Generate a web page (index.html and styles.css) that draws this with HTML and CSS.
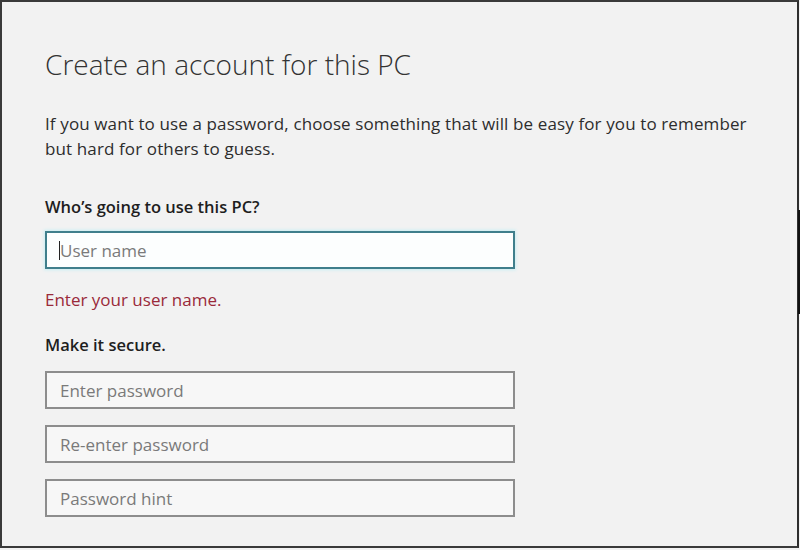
FILE: index.html
```html
<!DOCTYPE html>
<html lang="en">
<head>
<meta charset="utf-8">
<title>Create an account for this PC</title>
<link rel="stylesheet" href="styles.css">
</head>
<body>
<div class="frame">
  <div class="content">
    <h1 class="title">Create an account for this PC</h1>
    <p class="intro">If you want to use a password, choose something that will be easy for you to remember but hard for others to guess.</p>
    <h2 class="label label-who">Who’s going to use this PC?</h2>
    <div class="field field-focus">
      <span class="caret"></span>
      <input class="input" type="text" placeholder="User name">
    </div>
    <p class="error">Enter your user name.</p>
    <h2 class="label label-secure">Make it secure.</h2>
    <div class="stack">
      <div class="field"><input class="input" type="password" placeholder="Enter password"></div>
      <div class="field"><input class="input" type="password" placeholder="Re-enter password"></div>
      <div class="field"><input class="input" type="text" placeholder="Password hint"></div>
    </div>
  </div>
  <span class="thumb"></span>
</div>
</body>
</html>
```
FILE: styles.css
```css
html, body {
  margin: 0;
  padding: 0;
  background: #f2f2f2;
}
body {
  width: 800px;
  height: 550px;
  overflow: hidden;
  font-family: "Open Sans", "Noto Sans", "Liberation Sans", sans-serif;
  color: #2b2b2b;
}
.frame {
  position: relative;
  box-sizing: border-box;
  width: 799px;
  height: 548px;
  border-top: 2px solid #3a3a3a;
  border-left: 2px solid #3a3a3a;
  border-right: 2px solid #2e2e2e;
  border-bottom: 2px solid #3a3a3a;
  background: #f2f2f2;
}
.content {
  padding-left: 43px;
  padding-top: 45px;
  width: 720px;
}
.title {
  margin: 0;
  font-size: 28px;
  font-weight: 300;
  line-height: 34px;
  color: #333;
}
.intro {
  margin: 30px 0 0;
  font-size: 17px;
  line-height: 25px;
  letter-spacing: 0.12px;
  color: #2d2d2d;
}
.label {
  margin: 0;
  font-size: 16.5px;
  font-weight: 600;
  line-height: 22px;
  color: #1e1e1e;
}
.label-who {
  margin-top: 35px;
}
.label-secure {
  margin-top: 23px;
}
.field {
  position: relative;
  box-sizing: border-box;
  width: 470px;
  height: 38px;
  border: 2px solid #8d8d8d;
  background: #f7f7f7;
}
.field-focus {
  margin-top: 13px;
  border-color: #3f7f8c;
  background: #fcfefe;
  box-shadow: 0 0 3px 1px #c9eef3;
}
.input {
  box-sizing: border-box;
  width: 100%;
  height: 100%;
  border: 0;
  outline: 0;
  padding: 0 0 0 13px;
  background: transparent;
  font-family: inherit;
  font-size: 17px;
  color: #333;
}
.input::placeholder {
  color: #7a7a7a;
  opacity: 1;
}
.caret {
  position: absolute;
  left: 12px;
  top: 8px;
  width: 1px;
  height: 19px;
  background: #222;
}
.error {
  margin: 20px 0 0;
  font-size: 17px;
  line-height: 22px;
  color: #9a2a3a;
}
.stack {
  margin-top: 15px;
  display: flex;
  flex-direction: column;
  gap: 16px;
}
.thumb {
  position: absolute;
  right: -3px;
  top: 208px;
  width: 2px;
  height: 104px;
  background: #111;
}
```
